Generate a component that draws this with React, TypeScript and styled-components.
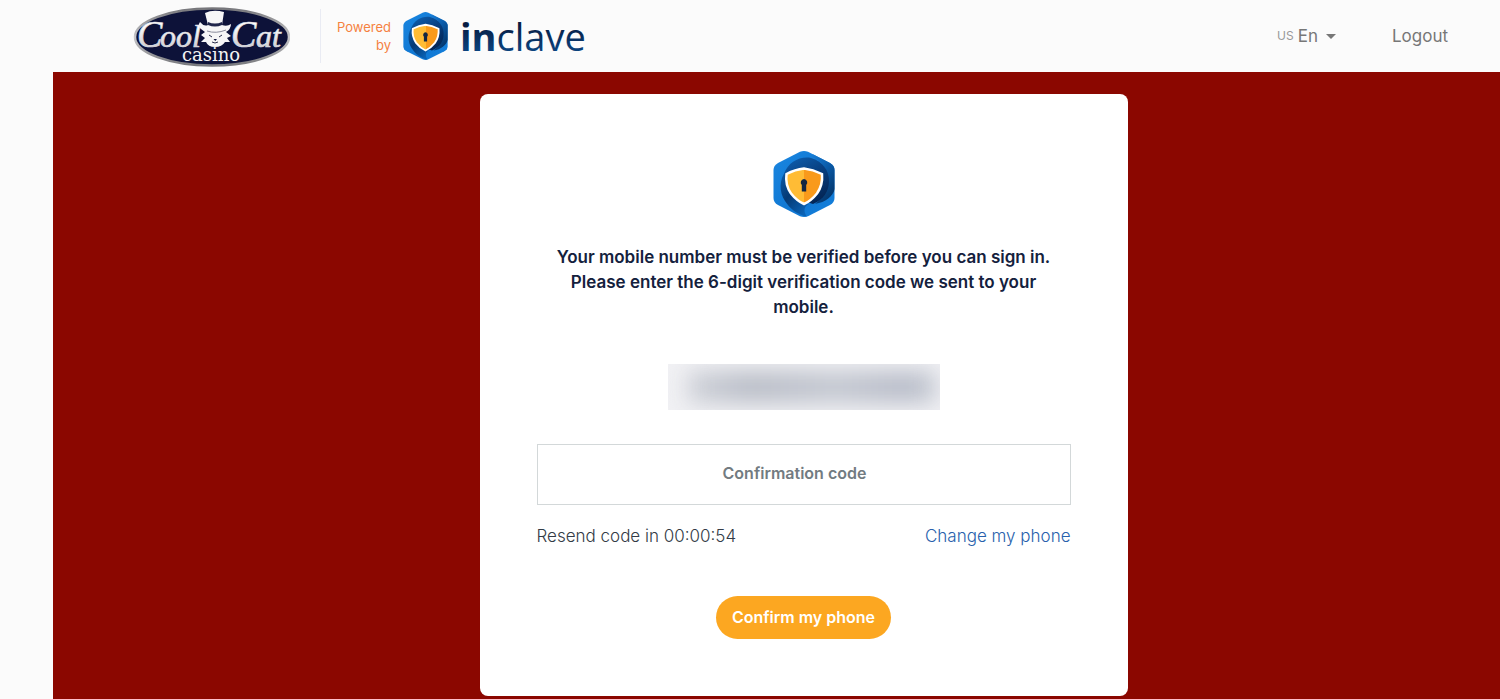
import React, { useId } from "react";
import styled, { createGlobalStyle } from "styled-components";

const GlobalStyle = createGlobalStyle`
  * { box-sizing: border-box; }
  body {
    margin: 0;
    background: #fbfbfb;
    font-family: Inter, "Liberation Sans", sans-serif;
    font-size: 17px;
    color: #14213d;
  }
`;

const Page = styled.div`
  min-height: 100vh;
  display: flex;
  flex-direction: column;
`;

const Header = styled.header`
  height: 72px;
  padding: 0 52px 0 132px;
  display: flex;
  align-items: center;
  justify-content: space-between;
  background: #fbfbfb;
`;

const Brand = styled.div`
  display: flex;
  align-items: center;
`;

const Powered = styled.div`
  width: 71px;
  height: 54px;
  margin: 0 12px 0 30px;
  border-left: 1px solid #e9ebf3;
  display: flex;
  align-items: center;
  justify-content: flex-end;
  text-align: right;
  font-size: 13px;
  line-height: 18px;
  color: #f5813f;
`;

const PoweredText = styled.span`
  width: 54px;
`;

const Nav = styled.nav`
  display: flex;
  align-items: center;
  gap: 56px;
  color: #777;
`;

const LanguageButton = styled.button`
  display: flex;
  align-items: center;
  gap: 4px;
  padding: 0;
  border: 0;
  background: none;
  font: inherit;
  line-height: 24px;
  color: inherit;
`;

const Region = styled.span`
  font-size: 12px;
  color: #999;
`;

const Caret = styled.span`
  margin-left: 4px;
  border: 5px solid transparent;
  border-top-color: currentColor;
  border-bottom: 0;
`;

const NavLink = styled.a`
  line-height: 24px;
  color: inherit;
  text-decoration: none;
`;

const Main = styled.main`
  flex: 1;
  margin-left: 53px;
  padding: 22px 0 3px 54px;
  display: flex;
  justify-content: center;
  align-items: flex-start;
  background: #8b0700;
`;

const Card = styled.form`
  width: 100%;
  max-width: 648px;
  padding: 57px;
  display: flex;
  flex-direction: column;
  align-items: center;
  background: #fff;
  border-radius: 8px;
`;

const Message = styled.h1`
  width: 100%;
  max-width: 520px;
  margin: 28px 0 44px;
  text-align: center;
  font-size: 17px;
  font-weight: 600;
  line-height: 25px;
`;

const MaskedPhone = styled.div`
  width: 272px;
  height: 46px;
  overflow: hidden;
  display: flex;
  align-items: center;
  padding: 0 4px 0 20px;
  background: #f1f1f4;
`;

const MaskedBar = styled.div`
  width: 100%;
  height: 32px;
  background: linear-gradient(90deg, #ced1d8, #b9bdc7 25%, #c3c7d0 60%, #b8bcc8 88%, #c4c9d3);
  filter: blur(11px);
`;

const CodeInput = styled.input`
  width: 100%;
  height: 61px;
  margin: 34px 0 19px;
  padding: 0 18px 4px 0;
  border: 1px solid #d3d8d9;
  border-radius: 0;
  outline: 0;
  background: #fff;
  text-align: center;
  font-family: inherit;
  font-size: 16px;
  font-weight: 600;
  color: #14213d;
  &::placeholder {
    color: #727b81;
    opacity: 1;
  }
`;

const Row = styled.div`
  width: 100%;
  display: flex;
  justify-content: space-between;
  font-weight: 300;
  line-height: 24px;
  color: #333b46;
`;

const ChangeLink = styled.a`
  color: #2861ac;
  text-decoration: none;
`;

const Submit = styled.button`
  width: 175px;
  height: 43px;
  margin-top: 48px;
  padding: 0 0 2px;
  border: 0;
  border-radius: 22px;
  background: #fca721;
  color: #fff;
  font-family: inherit;
  font-size: 16px;
  font-weight: 600;
`;

const hex =
  "M27 .8Q31 -.8 35 .8L57 12Q61.500 14.500 61.500 19V47Q61.500 51.500 57 54L35 65.200Q31 66.800 27 65.200L5 54Q.5 51.500 .5 47V19Q.5 14.500 5 12Z";

function Shield({ width, height }: { width: number; height: number }) {
  const id = useId();
  return (
    <svg width={width} height={height} viewBox="0 0 62 66" aria-hidden="true">
      <defs>
        <clipPath id={`${id}c`}>
          <path d={hex} />
        </clipPath>
        <linearGradient id={`${id}b`} x1="0" y1="0" x2="1" y2="1">
          <stop offset="0" stopColor="#1a86e0" />
          <stop offset="0.6" stopColor="#1077d2" />
          <stop offset="1" stopColor="#1480dc" />
        </linearGradient>
        <linearGradient id={`${id}t`} x1="0.2" y1="0" x2="0.7" y2="1">
          <stop offset="0" stopColor="#0d5cab" />
          <stop offset="0.45" stopColor="#083f80" />
          <stop offset="1" stopColor="#032453" />
        </linearGradient>
        <linearGradient id={`${id}r`} x1="0" y1="0" x2="0.5" y2="1">
          <stop offset="0" stopColor="#1a82dc" />
          <stop offset="0.5" stopColor="#0b5caa" />
          <stop offset="1" stopColor="#04386f" />
        </linearGradient>
        <linearGradient id={`${id}l`} x1="0" y1="0" x2="0.7" y2="1">
          <stop offset="0" stopColor="#0b5dac" />
          <stop offset="0.5" stopColor="#053a75" />
          <stop offset="1" stopColor="#0a62b5" />
        </linearGradient>
        <linearGradient id={`${id}y`} x1="0" y1="0" x2="1" y2="0">
          <stop offset="0.5" stopColor="#ffbc35" />
          <stop offset="0.5" stopColor="#f99a1b" />
        </linearGradient>
      </defs>
      <g clipPath={`url(#${id}c)`}>
        <path d="M0 0H62V66H0Z" fill={`url(#${id}b)`} />
        <path d="M38 6C48 9 54 17 55 27C56 35 52 44 42 53C53 51 59 46 62 38V12L42 0Z" fill={`url(#${id}r)`} />
        <path d="M11 23C15 11 27 5 38 7C50 10 56 20 56 30C56 40 51 48 40 53L25 48Z" fill={`url(#${id}t)`} />
        <path d="M13 20C6 28 6 41 12 50C17 58 24 63 34 66C30 60 31 55 36 53C27 52 18 42 15 31Z" fill={`url(#${id}l)`} />
      </g>
      <path
        d="M31 17.500Q40 18.500 49 23Q50 34 44 42.500Q38 50 31 53Q24 50 18 42.500Q12 34 13.500 23Q22 18.500 31 17.500Z"
        fill={`url(#${id}y)`}
        stroke="#fff"
        strokeWidth="2.500"
      />
      <path d="M31 28A3.500 3.500 0 0 1 33.200 34V40.500H28.800V34A3.500 3.500 0 0 1 31 28Z" fill="#132641" />
    </svg>
  );
}

function CasinoLogo() {
  return (
    <svg width="158" height="64" viewBox="0 0 158 64" role="img" aria-label="Cool Cat Casino">
      <defs>
        <linearGradient id="silver" x1="0" y1="0" x2="0" y2="1">
          <stop offset="0.3" stopColor="#fff" />
          <stop offset="1" stopColor="#bcbdc2" />
        </linearGradient>
        <linearGradient id="rim" x1="0" y1="0" x2="0" y2="1">
          <stop offset="0" stopColor="#77777b" />
          <stop offset="0.5" stopColor="#c8c8ca" />
          <stop offset="1" stopColor="#77787c" />
        </linearGradient>
      </defs>
      <ellipse cx="80" cy="33" rx="77" ry="28.500" fill="#0d1239" stroke="url(#rim)" strokeWidth="2.500" />
      <g
        fill="url(#silver)"
        stroke="#dcdce0"
        strokeWidth="0.700"
        fontFamily="'Liberation Serif', serif"
        fontStyle="italic"
      >
        <text x="5" y="43" fontSize="38">C</text>
        <text x="28" y="43" fontSize="32">ool</text>
        <text x="99" y="43" fontSize="38">C</text>
        <text x="124" y="43" fontSize="32">at</text>
      </g>
      <path
        d="M73 9Q81 5 92 8L90 21Q95 23 99 20Q99 25 94 28L99 32L95 34L98 38L93 38Q90 43 83 43Q76 43 74 38L69 38L73 34L69 31L73 28L69 25Q65 22 68 18Q72 23 76 21Z"
        fill="#f6f6f7"
      />
      <path d="M76 18Q83 21 90 18V21Q83 24 76 21Z" fill="#20264b" />
      <path d="M75 27Q84 30 94 26" fill="none" stroke="#8a8c9c" />
      <path d="M77 31L80 33M87 33L90 31M80 38Q83 40 86 38" fill="none" stroke="#2b2f4c" />
      <path d="M81.500 35H85L83.300 37Z" fill="#0d1239" />
      <text
        x="79"
        y="57"
        textAnchor="middle"
        fontFamily="'DejaVu Serif', serif"
        fontSize="18"
        fill="#f3f3f3"
      >
        casino
      </text>
    </svg>
  );
}

function Wordmark() {
  return (
    <svg width="140" height="60" viewBox="0 0 140 60" role="img" aria-label="inclave">
      <defs>
        <linearGradient id="word" x1="0" y1="0" x2="0" y2="1">
          <stop offset="0.3" stopColor="#071d43" />
          <stop offset="0.8" stopColor="#0b4480" />
        </linearGradient>
      </defs>
      <text x="0" y="45" fontFamily="'Open Sans', sans-serif" fontSize="38" fill="url(#word)">
        <tspan fontWeight="700">in</tspan>
        <tspan fontWeight="400">clave</tspan>
      </text>
    </svg>
  );
}

const InclaveBrand = styled.div`
  display: flex;
  align-items: center;
  gap: 12px;
`;

export default function App() {
  return (
    <Page>
      <GlobalStyle />
      <Header>
        <Brand>
          <CasinoLogo />
          <Powered>
            <PoweredText>Powered by</PoweredText>
          </Powered>
          <InclaveBrand>
            <Shield width={45} height={48} />
            <Wordmark />
          </InclaveBrand>
        </Brand>
        <Nav>
          <LanguageButton type="button">
            <Region>US</Region>
            En
            <Caret />
          </LanguageButton>
          <NavLink href="#logout">Logout</NavLink>
        </Nav>
      </Header>
      <Main>
        <Card onSubmit={(e: React.FormEvent) => e.preventDefault()}>
          <Shield width={62} height={66} />
          <Message>
            Your mobile number must be verified before you can sign in. Please enter the 6-digit
            verification code we sent to your mobile.
          </Message>
          <MaskedPhone role="img" aria-label="Hidden phone number">
            <MaskedBar />
          </MaskedPhone>
          <CodeInput type="text" inputMode="numeric" placeholder="Confirmation code" aria-label="Confirmation code" />
          <Row>
            <span>Resend code in 00:00:54</span>
            <ChangeLink href="#change-phone">Change my phone</ChangeLink>
          </Row>
          <Submit type="submit">Confirm my phone</Submit>
        </Card>
      </Main>
    </Page>
  );
}
